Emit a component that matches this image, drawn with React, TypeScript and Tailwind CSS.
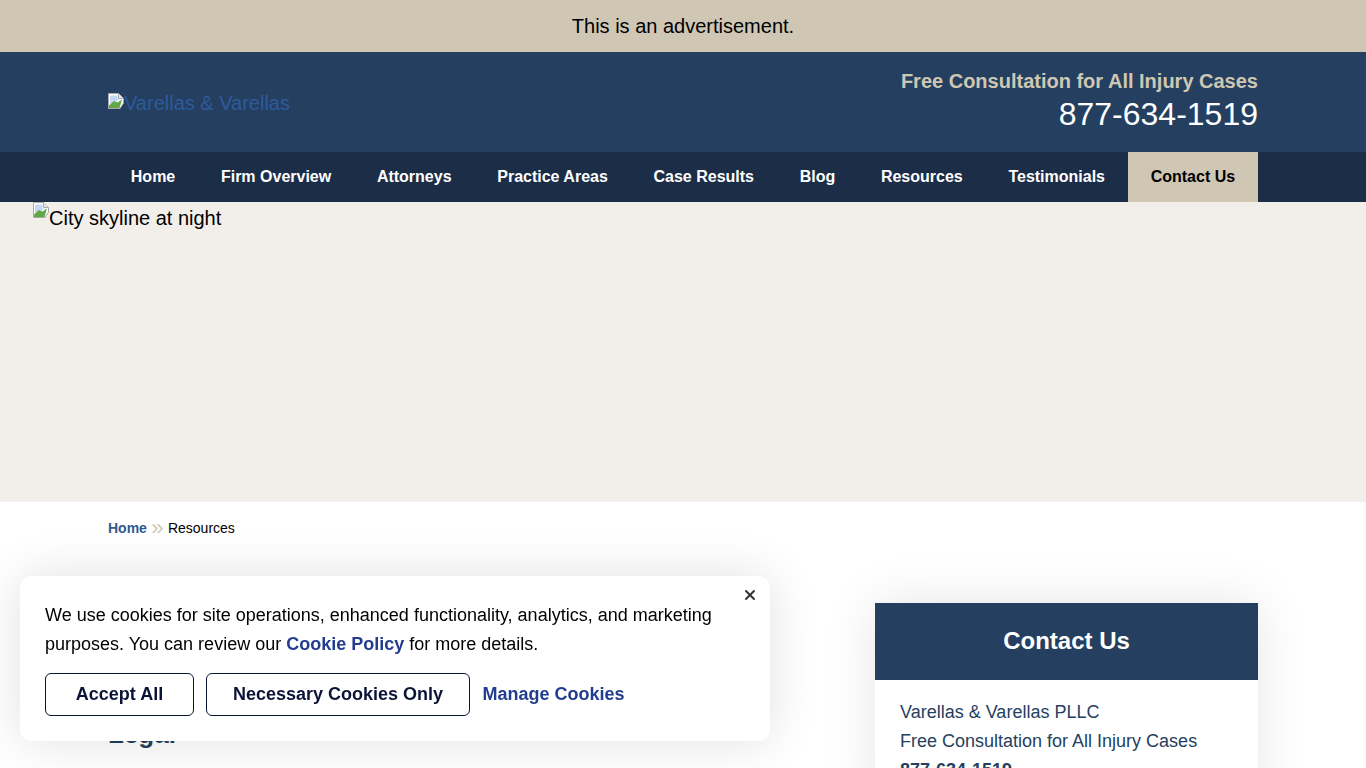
import React from "react";
import { X } from "lucide-react";

const navItems = [
  "Home",
  "Firm Overview",
  "Attorneys",
  "Practice Areas",
  "Case Results",
  "Blog",
  "Resources",
  "Testimonials",
];

// Chrome's broken image placeholder
const BrokenImage: React.FC = () => (
  <svg width="16" height="16" viewBox="0 0 16 16" className="shrink-0">
    <path d="M0.5 0.5H10.5L15.5 5.5V10L12 15.5H0.5Z" fill="#fff" stroke="#a8a8a8" />
    <path d="M10.5 0.5V5.5H15.5" fill="#e8e8e8" stroke="#a8a8a8" />
    <path d="M2 2.5H9.5V6.5H13L2 11Z" fill="#c4d7f5" />
    <path d="M1 15V12.5L6 8L9.5 9.5L14 6.5L11.5 15Z" fill="#5fa845" />
  </svg>
);

const App: React.FC = () => {
  return (
    <div className="relative h-screen overflow-hidden bg-white font-['Liberation_Sans',Arial,sans-serif] text-black">
      <div className="flex h-[52px] items-center justify-center bg-[#cfc7b4] text-[20px]">
        This is an advertisement.
      </div>

      <header className="flex h-[100px] items-center justify-between bg-[#243f60] px-[108px]">
        <div className="mt-[2px] flex items-start text-[20px] leading-[20px] text-[#2e5a9a]">
          <BrokenImage />
          <span>Varellas &amp; Varellas</span>
        </div>
        <div className="mb-[1px] text-right">
          <div className="text-[20px] font-bold leading-[24px] text-[#cfc7b4]">
            Free Consultation for All Injury Cases
          </div>
          <div className="mt-[1px] text-[32px] leading-[40px] text-white">877-634-1519</div>
        </div>
      </header>

      <nav className="h-[50px] bg-[#1c2d47] px-[108px]">
        <ul className="flex h-full items-stretch justify-between whitespace-nowrap text-[16px] font-bold text-white">
          {navItems.map((item) => (
            <li key={item} className="flex items-center px-[22.8px]">
              {item}
            </li>
          ))}
          <li className="flex items-center bg-[#cfc7b4] px-[22.8px] text-black">Contact Us</li>
        </ul>
      </nav>

      <div className="h-[300px] bg-[#f2efeb] pl-[33px]">
        <div className="flex items-start text-[20px] leading-[32px]">
          <BrokenImage />
          <span>City skyline at night</span>
        </div>
      </div>

      <div className="px-[108px]">
        <div className="flex h-[52px] items-center gap-[4.4px] text-[14px]">
          <span className="font-bold text-[#2e5a8e]">Home</span>
          <span className="text-[22px] leading-none text-[#cfc7b4]">»</span>
          <span>Resources</span>
        </div>

        <div className="flex justify-between pt-[49px]">
          <div className="pt-[115px]">
            <h2 className="text-[26px] font-bold leading-[32px] text-[#243f60]">Legal</h2>
          </div>
          <aside className="w-[383px] shadow-[0_0_50px_rgba(0,0,0,0.1)]">
            <h3 className="flex h-[77px] items-center justify-center bg-[#243f60] pb-[2px] text-[24px] font-bold text-white">
              Contact Us
            </h3>
            <div className="bg-white px-[25px] pb-6 pt-[18px] text-[18px] leading-[29px] text-[#243f60]">
              <div>Varellas &amp; Varellas PLLC</div>
              <div>Free Consultation for All Injury Cases</div>
              <div className="font-bold">877-634-1519</div>
            </div>
          </aside>
        </div>
      </div>

      <div className="fixed left-5 top-[576px] h-[165px] w-[750px] rounded-xl bg-white px-[25px] pt-[25px] shadow-[0_0_50px_rgba(0,0,0,0.12)]">
        <button
          className="absolute right-[12px] top-[11px] flex h-[16px] w-[16px] items-center justify-center text-[#333]"
          aria-label="Close"
        >
          <X size={16} strokeWidth={3} />
        </button>
        <p className="text-[18px] leading-[29px]">
          We use cookies for site operations, enhanced functionality, analytics, and marketing
          purposes. You can review our{" "}
          <a className="font-bold text-[#223d8f]">Cookie Policy</a> for more details.
        </p>
        <div className="mt-[14px] flex items-center text-[18px] font-bold">
          <button className="h-[43px] w-[149px] rounded-md border border-[#0b1437] text-[#0b1437]">
            Accept All
          </button>
          <button className="ml-3 h-[43px] w-[264px] rounded-md border border-[#0b1437] text-[#0b1437]">
            Necessary Cookies Only
          </button>
          <a className="ml-[12.5px] text-[#223d8f]">Manage Cookies</a>
        </div>
      </div>
    </div>
  );
};

export default App;
